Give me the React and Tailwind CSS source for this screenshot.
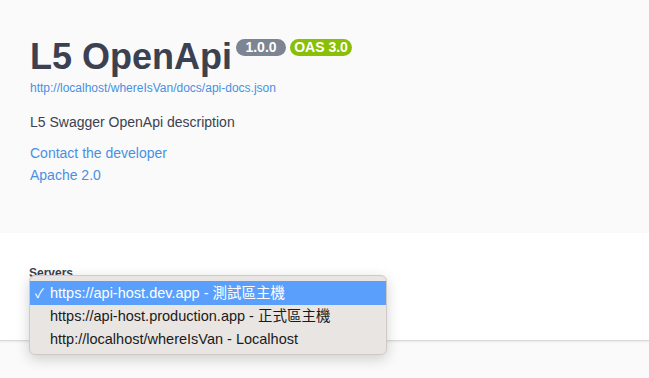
import React from 'react';

const servers = [
  { url: 'https://api-host.dev.app - 測試區主機', selected: true },
  { url: 'https://api-host.production.app - 正式區主機' },
  { url: 'http://localhost/whereIsVan - Localhost' },
];

const App = () => {
  return (
    <div className="relative min-h-[378px] bg-[#fafafa] font-['Liberation_Sans','Noto_Sans_CJK_TC',sans-serif] text-[#3b4151]">
      {/* Info block */}
      <div className="h-[233px] px-[30px] pt-[35px]">
        <div className="flex items-start">
          <h1 className="text-[36px] font-bold leading-[43px] text-[#3b4151]">L5 OpenApi</h1>
          <span className="ml-[4px] mt-[4px] w-[50px] rounded-full bg-[#7d8492] text-center text-[14px] font-bold leading-[17px] text-white">
            1.0.0
          </span>
          <span className="ml-[4px] mt-[4px] w-[62px] rounded-full bg-[#89bf04] text-center text-[14px] font-bold leading-[17px] text-white">
            OAS 3.0
          </span>
        </div>
        <a className="mt-[3px] block text-[12px] leading-[14px] text-[#4990e2]">
          http://localhost/whereIsVan/docs/api-docs.json
        </a>
        <p className="mt-[19px] text-[14px] leading-[16px]">L5 Swagger OpenApi description</p>
        <div className="mt-[15px] space-y-[6px] text-[14px] leading-[16px] text-[#4990e2]">
          <a className="block">Contact the developer</a>
          <a className="block">Apache 2.0</a>
        </div>
      </div>

      {/* Servers */}
      <div className="h-[108px] border-b border-[#d9d9d9] bg-white px-[29px] pt-[33px] shadow-[0_1px_2px_rgba(0,0,0,0.08)]">
        <div className="text-[12px] font-bold leading-[14px] text-[#3b4151]">Servers</div>
      </div>

      {/* Open select menu */}
      <div className="absolute left-[29px] top-[275px] w-[358px] rounded-[6px] border border-[#cfcac7] bg-[#e9e5e2] pb-[3px] pt-[5px] shadow-[0_4px_14px_rgba(0,0,0,0.18)]">
        {servers.map((s, idx) => (
          <div
            key={idx}
            className={`flex h-[23px] items-center text-[14.5px] leading-[23px] ${
              s.selected ? 'h-[24px] bg-[#5a9ffc] text-white' : 'text-[#1a1a1a]'
            }`}
          >
            <span className="w-[20px] pl-[5px] text-[13px]">{s.selected ? '✓' : ''}</span>
            <span>{s.url}</span>
          </div>
        ))}
      </div>
    </div>
  );
};

export default App;
